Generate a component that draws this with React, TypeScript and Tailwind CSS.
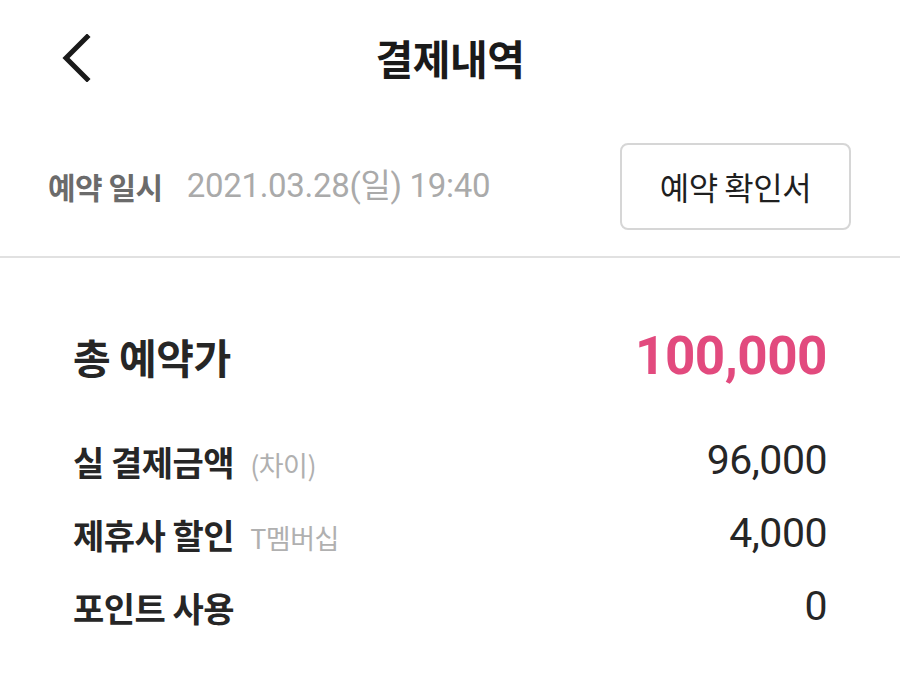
const font = "font-['Noto_Sans_CJK_KR','Noto_Sans',sans-serif]";

const rows = [
  { label: "실 결제금액", sub: "(차이)", value: "96,000" },
  { label: "제휴사 할인", sub: "T멤버십", value: "4,000" },
  { label: "포인트 사용", sub: "", value: "0" },
];

export default function App() {
  return (
    <div className={`${font} w-[900px] h-[681px] bg-white overflow-hidden`}>
      {/* Header */}
      <header className="relative h-[116px] flex items-center justify-center">
        <button className="absolute left-[56px] top-[32px] w-[40px] h-[52px] flex items-center justify-center">
          <svg width="32" height="48" viewBox="0 0 32 48" fill="none">
            <path d="M27 3 L6 24 L27 45" stroke="#1a1a1a" strokeWidth="5" strokeLinecap="square" />
          </svg>
        </button>
        <h1 className="text-[41px] font-bold text-[#1a1a1a] tracking-[-0.5px] leading-none -mt-[2px]">결제내역</h1>
      </header>

      {/* Reservation date */}
      <div className="h-[142px] pl-[48px] pr-[49px] flex items-center justify-between border-b-2 border-[#e1e1e1]">
        <div className="flex items-center gap-[24px]">
          <span className="text-[30px] font-bold text-[#6b6b6b] tracking-[-0.5px]">예약 일시</span>
          <span className="text-[33px] text-[#aaaaaa] font-['Roboto','Noto_Sans_CJK_KR',sans-serif] tracking-[-0.3px]">2021.03.28(일) 19:40</span>
        </div>
        <button className="w-[231px] h-[87px] border-2 border-[#d6d6d6] rounded-[8px] text-[32px] text-[#1f1f1f] tracking-[-0.5px]">
          예약 확인서
        </button>
      </div>

      {/* Amounts */}
      <div className="px-[73px] pt-[72px]">
        <div className="flex items-center justify-between h-[54px]">
          <span className="text-[41px] font-bold text-[#262626] tracking-[-0.5px]">총 예약가</span>
          <span className="text-[53px] font-bold text-[#e24a7e] font-['Roboto',sans-serif] tracking-[-0.5px]">100,000</span>
        </div>
        <div className="mt-[50px] flex flex-col gap-[19px]">
          {rows.map((r) => (
            <div key={r.label} className="flex items-center justify-between h-[54px]">
              <div className="flex items-baseline gap-[16px]">
                <span className="text-[34px] font-bold text-[#262626] tracking-[-0.5px]">{r.label}</span>
                {r.sub && <span className="text-[27px] text-[#b0b0b0] tracking-[-0.5px]">{r.sub}</span>}
              </div>
              <span className="text-[41px] text-[#262626] font-['Roboto',sans-serif] tracking-[-0.5px]">{r.value}</span>
            </div>
          ))}
        </div>
      </div>
    </div>
  );
}
